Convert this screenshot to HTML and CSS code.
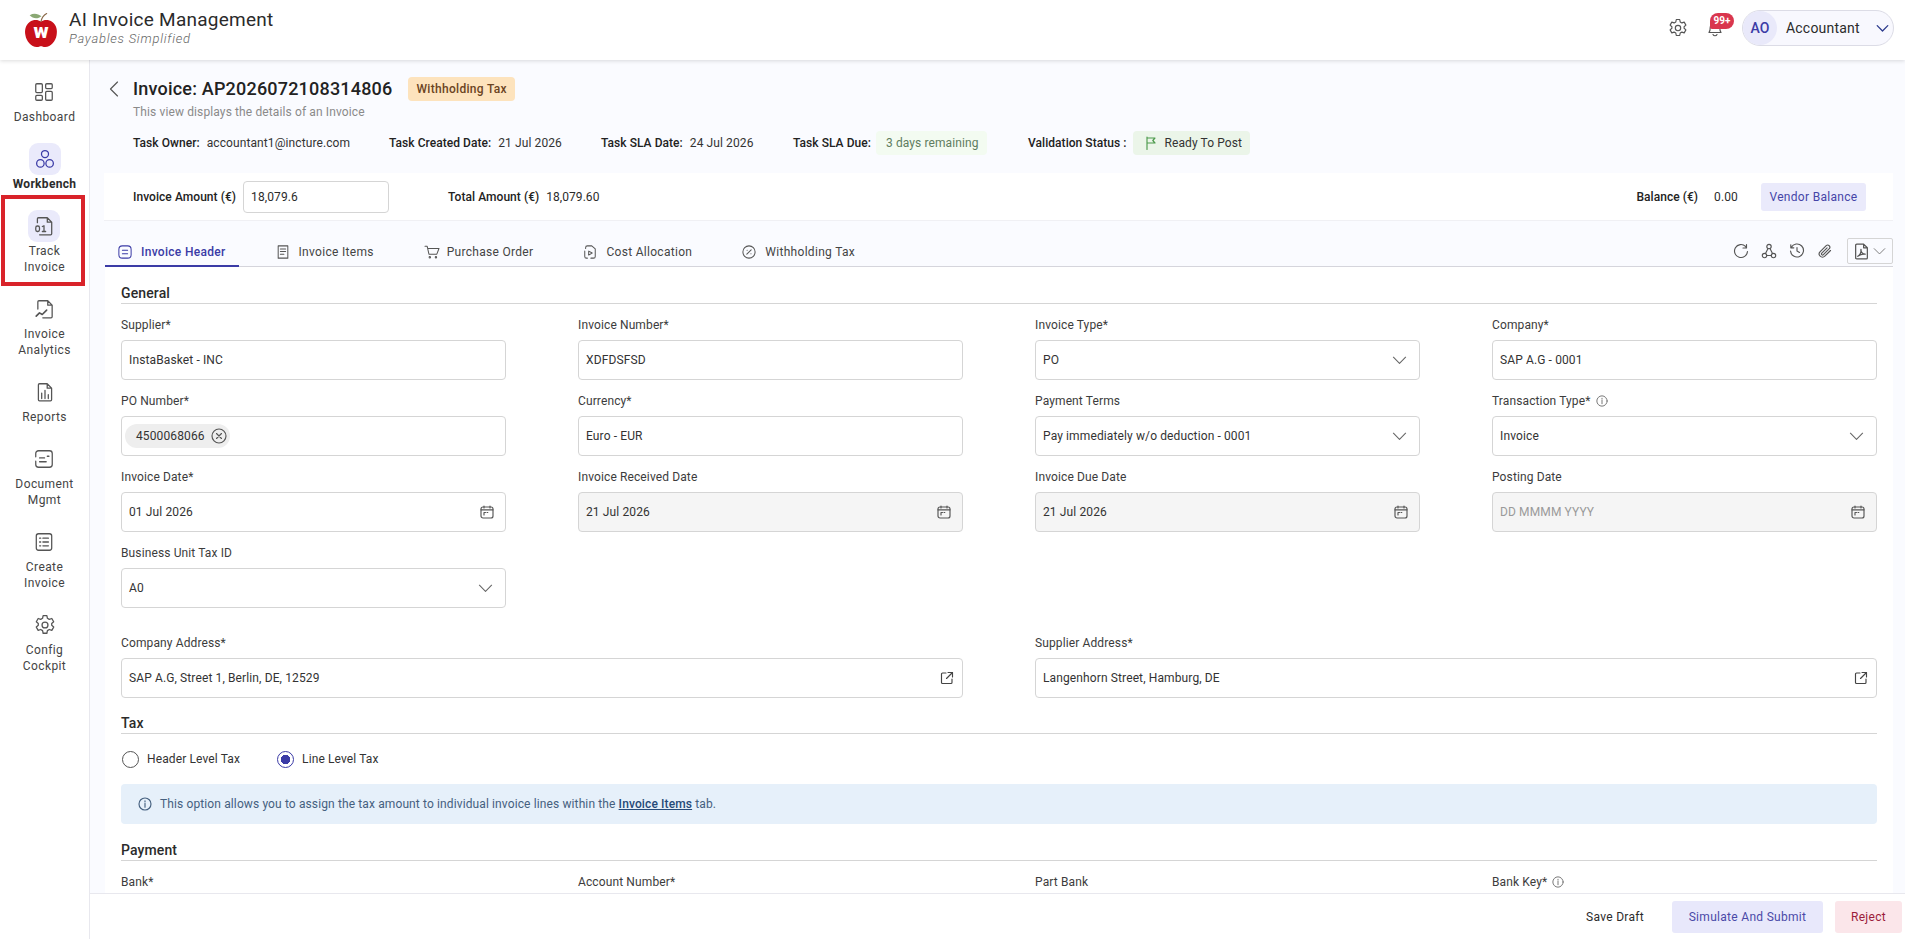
FILE: index.html
```html
<!DOCTYPE html>
<html lang="en">

<head>
    <meta charset="UTF-8">
    <meta name="viewport" content="width=device-width, initial-scale=1.0">
    <title>AI Invoice Management</title>
    <link rel="stylesheet" href="styles.css">
</head>

<body>
    <svg class="sprite" aria-hidden="true">
        <symbol id="i-cal" viewBox="0 0 14 14">
            <rect x="1" y="2" width="12" height="11" rx="2" />
            <path d="M1 4.800h12M4 1v2M10 1v2M4 7.500h1.500M4 7.500v2.500M7 7.500h.8" />
        </symbol>
        <symbol id="i-down" viewBox="0 0 16 16">
            <path d="M1.500 4.500 8 11l6.500-6.500" />
        </symbol>
        <symbol id="i-open" viewBox="0 0 14 14">
            <path d="M6 2H2.500A1 1 0 0 0 1.500 3v8.500a1 1 0 0 0 1 1H11a1 1 0 0 0 1-1V8M8 1.500h4.500V6M12.500 1.500 6.500 7.500" />
        </symbol>
        <symbol id="i-info" viewBox="0 0 14 14">
            <circle cx="7" cy="7" r="6" />
            <path d="M7 6.200v4M7 3.800v1" />
        </symbol>
    </svg>

    <header class="topbar">
        <div class="brand">
            <svg class="logo" viewBox="0 0 36 38">
                <path d="M18 10c-3-2-8-2.500-12 .5C1.500 14 .5 19 1.500 24.500c1 6 6 12.500 12 12.500 2 0 3-.8 4.500-.8s2.500.8 4.500.8c6 0 11-6.500 12-12.500 1-5.500 0-10.500-4.500-14-4-3-9-2.500-12-.5z" fill="#c8101a" />
                <path d="M18 10c.6-3.500 2.500-6.500 6-8.500" fill="none" stroke="#8a6a4a" stroke-width="1.200" />
                <path d="M6 3.500c4-2.500 8.500-2 12.500 1-3.500 3-9 3-12.500-1z" fill="#8aa874" />
                <text x="18" y="28" text-anchor="middle" class="logo-w">w</text>
            </svg>
            <div class="brand-text">
                <div class="brand-name">AI Invoice Management</div>
                <div class="brand-sub">Payables Simplified</div>
            </div>
        </div>
        <div class="top-actions">
            <svg class="top-icon" viewBox="0 0 20 20">
                <path d="M8.300 1.500h3.400l.5 2.400 1.700 1 2.300-.8 1.700 3-1.800 1.600v1.600l1.800 1.600-1.700 3-2.300-.8-1.700 1-.5 2.400H8.300l-.5-2.400-1.700-1-2.300.8-1.700-3 1.800-1.600V8.700L2.100 7.100l1.700-3 2.300.8 1.700-1z" />
                <circle cx="10" cy="10" r="2.700" />
            </svg>
            <div class="bell">
                <svg class="top-icon" viewBox="0 0 20 20">
                    <path d="M4 14.500c1-1 1.200-2.500 1.200-5a4.800 4.800 0 0 1 9.600 0c0 2.500.2 4 1.200 5zM8 16.500a2.200 2.200 0 0 0 4 0" />
                </svg>
                <span class="bell-badge">99+</span>
            </div>
            <div class="user-pill">
                <span class="avatar">AO</span>
                <span class="user-name">Accountant</span>
                <svg class="user-chev" viewBox="0 0 16 16"><use href="#i-down" /></svg>
            </div>
        </div>
    </header>

    <div class="shell">
        <nav class="sidenav">
            <a class="nav-item">
                <span class="nav-icon">
                    <svg viewBox="0 0 20 20">
                        <rect x="2.500" y="2.500" width="6" height="8" rx="1" />
                        <rect x="11.500" y="2.500" width="6" height="4.500" rx="1" />
                        <rect x="2.500" y="13" width="6" height="4.500" rx="1" />
                        <rect x="11.500" y="9.500" width="6" height="8" rx="1" />
                    </svg>
                </span>
                Dashboard
            </a>
            <a class="nav-item is-bold">
                <span class="nav-icon is-on">
                    <svg viewBox="0 0 20 20">
                        <circle cx="10" cy="5.500" r="3.200" />
                        <circle cx="5.800" cy="14" r="3.400" />
                        <circle cx="14.200" cy="14" r="3.400" />
                    </svg>
                </span>
                Workbench
            </a>
            <a class="nav-item">
                <span class="nav-icon is-on is-grey">
                    <svg viewBox="0 0 20 20">
                        <path d="M4 7V3.500a1 1 0 0 1 1-1h8l4 4V17a1 1 0 0 1-1 1H6M13 2.500v4h4" />
                        <rect x="2.500" y="10" width="3.400" height="5" rx="1.500" />
                        <path d="M8.500 10.500l1.500-.7V15M8.500 15h3" />
                    </svg>
                </span>
                Track<br>Invoice
            </a>
            <a class="nav-item">
                <span class="nav-icon">
                    <svg viewBox="0 0 20 20">
                        <path d="M3.500 10V3.500a1 1 0 0 1 1-1h8l4 4V17a1 1 0 0 1-1 1H8M12.500 2.500v4h4" />
                        <path d="M2 16.500l3-3 2.500 1.500 4-4" stroke-width="1.500" />
                    </svg>
                </span>
                Invoice<br>Analytics
            </a>
            <a class="nav-item">
                <span class="nav-icon">
                    <svg viewBox="0 0 20 20">
                        <path d="M4 3.500a1 1 0 0 1 1-1h7l4 4V17a1 1 0 0 1-1 1H5a1 1 0 0 1-1-1zM12 2.500v4h4" />
                        <path d="M7 16v-5M10 16V8.500M13 16v-3.500" />
                    </svg>
                </span>
                Reports
            </a>
            <a class="nav-item">
                <span class="nav-icon">
                    <svg viewBox="0 0 20 20">
                        <path d="M2.500 8V5A2.500 2.500 0 0 1 5 2.500h10A2.500 2.500 0 0 1 17.500 5v10a2.500 2.500 0 0 1-2.500 2.500H5A2.500 2.500 0 0 1 2.500 15v-3M6 9h4.500M6 12.500h6M13 7.500h1.500" />
                    </svg>
                </span>
                Document<br>Mgmt
            </a>
            <a class="nav-item">
                <span class="nav-icon">
                    <svg viewBox="0 0 20 20">
                        <rect x="3" y="2.500" width="14" height="15" rx="2" />
                        <path d="M6 6.500h1M9 6.500h5M6 10h1M9 10h5M6 13.500h1M9 13.500h5" />
                    </svg>
                </span>
                Create<br>Invoice
            </a>
            <a class="nav-item">
                <span class="nav-icon">
                    <svg viewBox="0 0 20 20">
                        <path d="M8.300 1.500h3.400l.5 2.400 1.700 1 2.300-.8 1.700 3-1.800 1.600v1.600l1.800 1.600-1.700 3-2.300-.8-1.700 1-.5 2.400H8.300l-.5-2.400-1.700-1-2.300.8-1.700-3 1.800-1.600V8.700L2.100 7.100l1.700-3 2.300.8 1.700-1z" />
                        <circle cx="10" cy="10" r="2.700" />
                    </svg>
                </span>
                Config<br>Cockpit
            </a>
            <div class="nav-mark"></div>
        </nav>

        <div class="content">
            <main class="scroll">
                <section class="page-head">
                    <div class="title-row">
                        <svg class="back" viewBox="0 0 10 16">
                            <path d="M8.500 1 1.500 8l7 7" />
                        </svg>
                        <h1>Invoice: AP2026072108314806</h1>
                        <span class="tag-tax">Withholding Tax</span>
                    </div>
                    <p class="subtitle">This view displays the details of an Invoice</p>
                    <div class="meta-row">
                        <span class="meta meta-owner"><b>Task Owner:</b>accountant1@incture.com</span>
                        <span class="meta meta-created"><b>Task Created Date:</b>21 Jul 2026</span>
                        <span class="meta meta-sladate"><b>Task SLA Date:</b>24 Jul 2026</span>
                        <span class="meta meta-sladue"><b>Task SLA Due:</b><span class="sla-pill">3 days remaining</span></span>
                        <span class="meta meta-status"><b>Validation Status :</b>
                            <span class="ready-pill">
                                <svg viewBox="0 0 12 14">
                                    <path d="M2 1v12.500M2 2h8L7.800 4.500 10 7H2" />
                                </svg>
                                Ready To Post
                            </span>
                        </span>
                    </div>
                </section>

                <section class="amount-band">
                    <b class="amount-label">Invoice Amount (€)</b>
                    <div class="amount-input">18,079.6</div>
                    <b class="total-label">Total Amount (€)</b>
                    <span class="total-value">18,079.60</span>
                    <b class="balance-label">Balance (€)</b>
                    <span class="balance-value">0.00</span>
                    <button class="vendor-btn">Vendor Balance</button>
                </section>

                <div class="tabs">
                    <a class="tab is-active">
                        <svg viewBox="0 0 16 16">
                            <rect x="1" y="1" width="14" height="14" rx="4" />
                            <path d="M5 6h6M5 10h6" />
                        </svg>
                        Invoice Header
                    </a>
                    <a class="tab">
                        <svg viewBox="0 0 16 16">
                            <path d="M2.500 1h11v14h-11zM5 4.500h6M5 7.500h6M5 10.500h4" />
                        </svg>
                        Invoice Items
                    </a>
                    <a class="tab">
                        <svg class="tab-cart" viewBox="0 0 18 16">
                            <path d="M1 1.500h2.500l2 9h9L17 4H4.200" />
                            <circle cx="6.500" cy="14" r=".8" />
                            <circle cx="13.500" cy="14" r=".8" />
                        </svg>
                        Purchase Order
                    </a>
                    <a class="tab">
                        <svg viewBox="0 0 16 16">
                            <path d="M5 1h5l4 3.500V13a2 2 0 0 1-2 2H9M5 1a2 2 0 0 0-2 2v1M2 7v6a2 2 0 0 0 2 2h1" />
                            <path d="M6.500 7v4.500L10.500 9.200z" />
                        </svg>
                        Cost Allocation
                    </a>
                    <a class="tab">
                        <svg viewBox="0 0 16 16">
                            <circle cx="8" cy="8" r="7" />
                            <path d="M5.500 10.500l5-5M5.800 6h.1M10.200 10h.1" />
                        </svg>
                        Withholding Tax
                    </a>
                    <div class="tab-tools">
                        <svg viewBox="0 0 16 16">
                            <path d="M13.500 1.500v3.500H10M14.500 8.500A6.500 6.500 0 1 1 12.500 3.300l1 1.700" />
                        </svg>
                        <svg viewBox="0 0 16 16">
                            <circle cx="8" cy="3.500" r="2.200" />
                            <circle cx="3.500" cy="12.500" r="2.200" />
                            <circle cx="12.500" cy="12.500" r="2.200" />
                            <path d="M7 5.500 4.500 10.500M9 5.500l2.500 5M5.700 12.500h4.600" />
                        </svg>
                        <svg viewBox="0 0 16 16">
                            <path d="M2.200 4.500A6.500 6.500 0 1 1 1.500 8M1.800 1.800v3h3M8 4.500V8l2.500 1.500" />
                        </svg>
                        <svg viewBox="0 0 16 16">
                            <path d="M13.500 7.500 7.800 13.200a3.200 3.200 0 0 1-4.600-4.600l6-6a2.200 2.200 0 0 1 3.100 3.100l-5.900 6a1.100 1.100 0 0 1-1.600-1.600l5.300-5.300" />
                        </svg>
                        <div class="pdf-btn">
                            <svg viewBox="0 0 14 16">
                                <path d="M1.500 2a1 1 0 0 1 1-1H9l3.500 3.500V14a1 1 0 0 1-1 1h-9a1 1 0 0 1-1-1zM9 1v3.500h3.500" />
                                <path d="M3.500 12.500c2-1 3.500-4 3-6.500-.5 2 1.500 4.500 4 4.500-2.500-.3-5 .5-7 2z" />
                            </svg>
                            <svg class="pdf-chev" viewBox="0 0 16 16"><use href="#i-down" /></svg>
                        </div>
                    </div>
                </div>

                <section class="sheet">
                    <h2 class="sec-title">General</h2>
                    <div class="grid">
                        <div class="field">
                            <label>Supplier*</label>
                            <div class="box">InstaBasket - INC</div>
                        </div>
                        <div class="field">
                            <label>Invoice Number*</label>
                            <div class="box">XDFDSFSD</div>
                        </div>
                        <div class="field">
                            <label>Invoice Type*</label>
                            <div class="box">PO<svg class="chev" viewBox="0 0 16 16"><use href="#i-down" /></svg></div>
                        </div>
                        <div class="field">
                            <label>Company*</label>
                            <div class="box">SAP A.G - 0001</div>
                        </div>

                        <div class="field">
                            <label>PO Number*</label>
                            <div class="box box-chips">
                                <span class="chip">4500068066
                                    <svg viewBox="0 0 16 16">
                                        <circle cx="8" cy="8" r="7" />
                                        <path d="M5.500 5.500l5 5M10.500 5.500l-5 5" />
                                    </svg>
                                </span>
                            </div>
                        </div>
                        <div class="field">
                            <label>Currency*</label>
                            <div class="box">Euro - EUR</div>
                        </div>
                        <div class="field">
                            <label>Payment Terms</label>
                            <div class="box">Pay immediately w/o deduction - 0001<svg class="chev" viewBox="0 0 16 16"><use href="#i-down" /></svg></div>
                        </div>
                        <div class="field">
                            <label>Transaction Type* <svg class="hint" viewBox="0 0 14 14"><use href="#i-info" /></svg></label>
                            <div class="box">Invoice<svg class="chev" viewBox="0 0 16 16"><use href="#i-down" /></svg></div>
                        </div>

                        <div class="field">
                            <label>Invoice Date*</label>
                            <div class="box">01 Jul 2026<svg class="cal" viewBox="0 0 14 14"><use href="#i-cal" /></svg></div>
                        </div>
                        <div class="field">
                            <label>Invoice Received Date</label>
                            <div class="box is-off">21 Jul 2026<svg class="cal" viewBox="0 0 14 14"><use href="#i-cal" /></svg></div>
                        </div>
                        <div class="field">
                            <label>Invoice Due Date</label>
                            <div class="box is-off">21 Jul 2026<svg class="cal" viewBox="0 0 14 14"><use href="#i-cal" /></svg></div>
                        </div>
                        <div class="field">
                            <label>Posting Date</label>
                            <div class="box is-off is-empty">DD MMMM YYYY<svg class="cal" viewBox="0 0 14 14"><use href="#i-cal" /></svg></div>
                        </div>

                        <div class="field">
                            <label>Business Unit Tax ID</label>
                            <div class="box">A0<svg class="chev" viewBox="0 0 16 16"><use href="#i-down" /></svg></div>
                        </div>
                    </div>

                    <div class="grid grid-address">
                        <div class="field">
                            <label>Company Address*</label>
                            <div class="box">SAP A.G, Street 1, Berlin, DE, 12529<svg class="open" viewBox="0 0 14 14"><use href="#i-open" /></svg></div>
                        </div>
                        <div class="field">
                            <label>Supplier Address*</label>
                            <div class="box">Langenhorn Street, Hamburg, DE<svg class="open" viewBox="0 0 14 14"><use href="#i-open" /></svg></div>
                        </div>
                    </div>

                    <h2 class="sec-title sec-tax">Tax</h2>
                    <div class="radios">
                        <span class="radio"><i></i>Header Level Tax</span>
                        <span class="radio is-on"><i></i>Line Level Tax</span>
                    </div>
                    <div class="banner">
                        <svg viewBox="0 0 14 14"><use href="#i-info" /></svg>
                        <span>This option allows you to assign the tax amount to individual invoice lines within the <a>Invoice Items</a> tab.</span>
                    </div>

                    <h2 class="sec-title sec-pay">Payment</h2>
                    <div class="grid">
                        <div class="field"><label>Bank*</label></div>
                        <div class="field"><label>Account Number*</label></div>
                        <div class="field"><label>Part Bank</label></div>
                        <div class="field"><label>Bank Key* <svg class="hint" viewBox="0 0 14 14"><use href="#i-info" /></svg></label></div>
                    </div>
                </section>
            </main>

            <footer class="actions">
                <button class="btn-draft">Save Draft</button>
                <button class="btn-submit">Simulate And Submit</button>
                <button class="btn-reject">Reject</button>
            </footer>
        </div>
    </div>
</body>

</html>
```

FILE: styles.css
```css
* {
    margin: 0;
    padding: 0;
    box-sizing: border-box;
}

html,
body {
    height: 100%;
    overflow: hidden;
}

body {
    font-family: 'Roboto', 'Liberation Sans', sans-serif;
    font-size: 12px;
    line-height: 16px;
    letter-spacing: 0.12px;
    color: #2b2b2b;
    background: #fff;
}

svg {
    fill: none;
    stroke: currentColor;
    stroke-width: 1.150;
    stroke-linecap: round;
    stroke-linejoin: round;
    flex-shrink: 0;
}

.sprite {
    display: none;
}

/* top bar */
.topbar {
    height: 60px;
    display: flex;
    justify-content: space-between;
    align-items: center;
    padding: 0 11px 0 24px;
    background: #fff;
    box-shadow: 0 1px 4px rgba(0, 0, 0, 0.14);
    position: relative;
    z-index: 2;
}

.brand {
    display: flex;
    align-items: center;
    gap: 11px;
}

.logo {
    width: 34px;
    height: 36px;
    stroke: none;
}

.logo-w {
    font-family: 'Roboto', sans-serif;
    font-size: 22px;
    font-weight: 900;
    fill: #fff;
}

.brand-text {
    padding-bottom: 3px;
}

.brand-name {
    font-size: 19px;
    line-height: 20px;
    letter-spacing: 0.26px;
    color: #2b2b2b;
}

.brand-sub {
    font-size: 13px;
    line-height: 17px;
    font-style: italic;
    font-weight: 300;
    letter-spacing: 0.75px;
    color: #666;
}

.top-actions {
    display: flex;
    align-items: center;
    padding-bottom: 4px;
}

.top-icon {
    width: 20px;
    height: 20px;
    color: #555;
    display: block;
}

.bell {
    position: relative;
    margin: 0 17px 0 17px;
}

.bell-badge {
    position: absolute;
    top: -5px;
    left: 5px;
    width: 24px;
    height: 16px;
    border-radius: 8px 8px 8px 2px;
    background: #d9364e;
    color: #fff;
    font-size: 10px;
    font-weight: 700;
    line-height: 16px;
    text-align: center;
    letter-spacing: 0;
}

.user-pill {
    width: 152px;
    height: 36px;
    display: flex;
    align-items: center;
    border: 1px solid #dcdce6;
    border-radius: 18px;
    background: #f8f8fe;
}

.avatar {
    width: 34px;
    height: 34px;
    border-radius: 50%;
    background: #e9e9fa;
    color: #3b3ba6;
    font-size: 14px;
    font-weight: 500;
    line-height: 34px;
    text-align: center;
    letter-spacing: 0;
}

.user-name {
    width: 85px;
    margin-left: 9px;
    font-size: 14px;
    letter-spacing: 0.2px;
    color: #2b2b2b;
}

.user-chev {
    width: 13px;
    height: 13px;
    margin-left: 5px;
    color: #2c3a8c;
    stroke-width: 1.600;
}

.shell {
    height: 879px;
    display: flex;
}

/* side nav */
.sidenav {
    width: 90px;
    padding-top: 16px;
    display: flex;
    flex-direction: column;
    gap: 18px;
    align-items: center;
    background: #fff;
    border-right: 1px solid #e8e8ee;
    position: relative;
    flex-shrink: 0;
}

.nav-item {
    display: flex;
    flex-direction: column;
    align-items: center;
    text-align: center;
    letter-spacing: 0.4px;
    color: #444;
}

.nav-item.is-bold {
    font-weight: 700;
    letter-spacing: 0.3px;
    color: #2b2b2b;
}

.nav-icon {
    width: 32px;
    height: 32px;
    margin-bottom: 1px;
    border-radius: 9px;
    display: flex;
    align-items: center;
    justify-content: center;
    color: #555;
}

.nav-icon svg {
    width: 22px;
    height: 22px;
}

.nav-icon.is-on {
    background: #eaeafb;
    color: #3b3ba6;
}

.nav-icon.is-grey {
    color: #555;
}

.nav-mark {
    position: absolute;
    left: 1px;
    top: 135px;
    width: 84px;
    height: 91px;
    border: 4px solid #d9232a;
}

/* content column */
.content {
    flex: 1;
    min-width: 0;
    display: flex;
    flex-direction: column;
    background: #fafbff;
}

.scroll {
    flex: 1;
    min-height: 0;
    overflow: hidden;
    padding: 0 12px 0 15px;
}

.page-head {
    padding: 19px 0 0 28px;
    height: 113px;
}

.title-row {
    display: flex;
    align-items: center;
    height: 20px;
    position: relative;
}

.back {
    position: absolute;
    left: -24px;
    top: 2px;
    width: 10px;
    height: 16px;
    color: #555;
}

h1 {
    font-size: 18px;
    font-weight: 500;
    letter-spacing: 0.2px;
    color: #222;
}

.tag-tax {
    margin-left: 16px;
    height: 24px;
    padding: 0 8px;
    border-radius: 4px;
    background: #fde3bd;
    color: #6b4423;
    line-height: 24px;
    font-weight: 500;
    letter-spacing: 0.3px;
}

.subtitle {
    margin-top: 5px;
    color: #8a8a8a;
}

.meta-row {
    margin-top: 11px;
    height: 24px;
    display: flex;
    align-items: center;
}

.meta {
    display: inline-flex;
    align-items: center;
    color: #333;
    letter-spacing: 0.1px;
}

.meta b {
    margin-right: 7px;
}

.meta b,
.amount-band b {
    font-weight: 500;
    letter-spacing: 0.05px;
    color: #222;
}

.meta-owner {
    width: 256px;
}

.meta-created {
    width: 212px;
}

.meta-sladate {
    width: 192px;
}

.meta-sladue {
    width: 235px;
}

.meta-status b {
    margin-right: 6px;
}

.sla-pill {
    height: 24px;
    padding: 0 8px 0 10px;
    margin-left: -2px;
    line-height: 24px;
    border-radius: 4px;
    background: #f3fbf1;
    color: #5f7d5f;
}

.ready-pill {
    height: 24px;
    padding: 0 8px 0 12px;
    display: inline-flex;
    align-items: center;
    gap: 8px;
    border-radius: 4px;
    background: #ebf5e9;
    color: #333;
}

.ready-pill svg {
    width: 12px;
    height: 14px;
    color: #4c9a4c;
}

.amount-band {
    height: 48px;
    display: flex;
    align-items: center;
    padding: 0 27px 0 29px;
    background: #fff;
    border-bottom: 1px solid #f0f0f4;
    margin-left: -1px;
}

.amount-input {
    width: 146px;
    height: 32px;
    margin-left: 7px;
    padding: 0 7px;
    line-height: 30px;
    border: 1px solid #d5d5d5;
    border-radius: 4px;
}

.total-label {
    margin-left: 59px;
}

.total-value {
    margin-left: 7px;
    letter-spacing: 0.05px;
}

.balance-label {
    margin-left: auto;
}

.balance-value {
    margin-left: 16px;
}

.vendor-btn {
    margin-left: 23px;
    width: 105px;
    height: 28px;
    border: 0;
    border-radius: 3px;
    background: #eaeafb;
    color: #4545a8;
    font: inherit;
    letter-spacing: 0.3px;
}

/* tabs */
.tabs {
    height: 46px;
    display: flex;
    align-items: flex-end;
    gap: 24px;
    border-bottom: 1px solid #d5d5dc;
}

.tab {
    height: 32px;
    display: flex;
    align-items: center;
    gap: 9px;
    padding: 3px 13px 0;
    color: #444;
    margin-bottom: -1px;
    border-bottom: 2px solid transparent;
    letter-spacing: 0.3px;
}

.tab svg {
    width: 14px;
    height: 14px;
    color: #555;
}

.tab .tab-cart {
    width: 16px;
    margin-right: -2px;
}

.tab.is-active {
    color: #3b3ba6;
    font-weight: 500;
    border-bottom-color: #3b3ba6;
}

.tab.is-active svg {
    color: #3b3ba6;
}

.tab-tools {
    margin-left: auto;
    display: flex;
    align-items: center;
    gap: 12px;
    align-self: flex-end;
    padding-bottom: 2px;
}

.tab-tools > svg {
    width: 16px;
    height: 16px;
    color: #555;
}

.pdf-btn {
    width: 46px;
    height: 26px;
    margin-left: 2px;
    display: flex;
    align-items: center;
    justify-content: space-between;
    padding: 0 6px 0 6px;
    border: 1px solid #d5d5d5;
    border-radius: 2px;
    color: #555;
}

.pdf-btn svg {
    width: 15px;
    height: 17px;
}

.pdf-btn .pdf-chev {
    width: 13px;
    height: 13px;
    color: #777;
}

/* form sheet */
.sheet {
    background: #fff;
    padding: 17px 16px 0 16px;
    height: 640px;
}

.sec-title {
    height: 19px;
    font-size: 14px;
    font-weight: 500;
    line-height: 18px;
    color: #2b2b2b;
    border-bottom: 1px solid #d5d5d5;
    box-sizing: content-box;
}

.grid {
    display: grid;
    grid-template-columns: repeat(4, 385px);
    column-gap: 72px;
    row-gap: 13px;
    margin-top: 13px;
}

.grid-address {
    grid-template-columns: repeat(2, 842px);
    column-gap: 72px;
    margin-top: 27px;
}

.field label {
    display: flex;
    align-items: center;
    gap: 5px;
    height: 16px;
    margin-bottom: 7px;
    color: #3c3c3c;
}

.field label:only-child {
    margin-bottom: 0;
}

.hint {
    width: 12px;
    height: 12px;
    color: #777;
}

.box {
    height: 40px;
    display: flex;
    align-items: center;
    justify-content: space-between;
    padding: 0 7px;
    border: 1px solid #d5d5d5;
    border-radius: 4px;
    background: #fff;
    color: #333;
}

.box.is-off {
    background: #f5f5f5;
}

.box.is-empty {
    color: #9a9a9a;
}

.box-chips {
    justify-content: flex-start;
    padding: 0 3px;
}

.chip {
    height: 24px;
    display: inline-flex;
    align-items: center;
    gap: 6px;
    padding: 0 3px 0 11px;
    border-radius: 12px;
    background: #eee;
}

.chip svg {
    width: 16px;
    height: 16px;
    color: #555;
}

.chev {
    width: 15px;
    height: 15px;
    margin-right: 5px;
    color: #666;
}

.cal {
    width: 14px;
    height: 14px;
    margin-right: 4px;
    color: #555;
}

.open {
    width: 14px;
    height: 14px;
    margin-right: 1px;
    color: #444;
}

.sec-tax {
    margin-top: 16px;
}

.radios {
    display: flex;
    gap: 36px;
    height: 16px;
    margin-top: 17px;
}

.radio {
    display: inline-flex;
    align-items: center;
    gap: 8px;
    color: #333;
    margin-left: 1px;
}

.radio i {
    width: 17px;
    height: 17px;
    border-radius: 50%;
    border: 1.500px solid #555;
    background: #fff;
}

.radio.is-on i {
    border-color: #3b3ba6;
    background: radial-gradient(circle, #3b3ba6 0 4.500px, #fff 5px);
}

.banner {
    margin-top: 17px;
    height: 40px;
    display: flex;
    align-items: center;
    gap: 8px;
    padding: 0 17px;
    border-radius: 4px;
    background: #e6f0fa;
    color: #45607f;
}

.banner svg {
    width: 14px;
    height: 14px;
}

.banner a {
    color: #264a78;
    font-weight: 500;
    text-decoration: underline;
}

.sec-pay {
    margin-top: 17px;
}

/* footer */
.actions {
    height: 46px;
    display: flex;
    align-items: center;
    justify-content: flex-end;
    gap: 12px;
    padding-right: 3px;
    background: #fff;
    border-top: 1px solid #e8e8ee;
    flex-shrink: 0;
}

.actions button {
    height: 32px;
    border: 0;
    border-radius: 3px;
    font: inherit;
    letter-spacing: 0.3px;
}

.btn-draft {
    width: 74px;
    margin-right: 8px;
    background: transparent;
    color: #2b2b2b;
}

.btn-submit {
    width: 151px;
    background: #e8e8fb;
    color: #4a4aa8;
}

.btn-reject {
    width: 67px;
    background: #fbe6ea;
    color: #9b1c3a;
}
```
